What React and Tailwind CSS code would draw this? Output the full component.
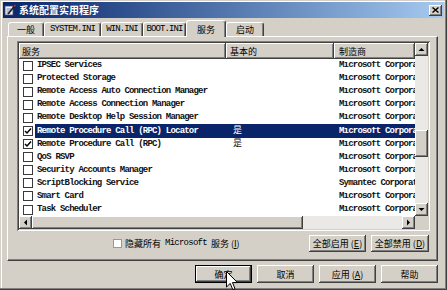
import React from 'react';

const rows = [
  { name: 'IPSEC Services', basic: '', maker: 'Microsoft Corporation' },
  { name: 'Protected Storage', basic: '', maker: 'Microsoft Corporation' },
  { name: 'Remote Access Auto Connection Manager', basic: '', maker: 'Microsoft Corporation' },
  { name: 'Remote Access Connection Manager', basic: '', maker: 'Microsoft Corporation' },
  { name: 'Remote Desktop Help Session Manager', basic: '', maker: 'Microsoft Corporation' },
  { name: 'Remote Procedure Call (RPC) Locator', basic: '是', maker: 'Microsoft Corporation', checked: true, selected: true },
  { name: 'Remote Procedure Call (RPC)', basic: '是', maker: 'Microsoft Corporation', checked: true },
  { name: 'QoS RSVP', basic: '', maker: 'Microsoft Corporation' },
  { name: 'Security Accounts Manager', basic: '', maker: 'Microsoft Corporation' },
  { name: 'ScriptBlocking Service', basic: '', maker: 'Symantec Corporation' },
  { name: 'Smart Card', basic: '', maker: 'Microsoft Corporation' },
  { name: 'Task Scheduler', basic: '', maker: 'Microsoft Corporation' },
];

const tabs = [
  { label: '一般', w: 'w-[36px]' },
  { label: 'SYSTEM.INI', w: 'w-[57px]', mono: true },
  { label: 'WIN.INI', w: 'w-[42px]', mono: true },
  { label: 'BOOT.INI', w: 'w-[43px]', mono: true },
  { label: '服务', w: 'w-[40px]', active: true },
  { label: '启动', w: 'w-[38px]' },
];

// classic 3D edges
const raised = 'shadow-[inset_-1px_-1px_#404040,inset_1px_1px_#ffffff,inset_-2px_-2px_#808080]';
const mono = "font-['Liberation_Mono','Noto_Sans_CJK_SC',monospace] tracking-[-0.75px]";
const monoBold = "font-['Liberation_Mono','Noto_Sans_CJK_SC',monospace] font-bold tracking-[-0.8px]";

export default function App() {
  return (
    <div className="relative w-[447px] h-[290px] bg-[#d4d0c8] pt-[2px] px-[3px] pb-[3px] flex flex-col overflow-hidden text-black font-['Noto_Sans_CJK_SC','Noto_Sans',sans-serif] shadow-[inset_-1px_-1px_#404040,inset_-2px_-2px_#808080,inset_1px_1px_#d4d0c8,inset_2px_2px_#ffffff]">
      {/* 标题栏 */}
      <div className="h-[16px] flex items-center bg-gradient-to-r from-[#0a246a] to-[#a6caf0]">
        <svg width="12" height="12" viewBox="0 0 12 12" className="ml-[1px]">
          <rect x="1" y="2" width="8" height="9" fill="#f4f4f4" stroke="#3a4a7a" strokeWidth="0.8" />
          <path d="M2.5 5h5M2.5 7h5M2.5 9h4" stroke="#4a6ab0" strokeWidth="0.8" />
          <path d="M4 10 L11 1.5" stroke="#202020" strokeWidth="1.6" />
          <path d="M10 2.5 L11.5 1" stroke="#c03020" strokeWidth="1.4" />
        </svg>
        <span className="ml-[3px] text-[10px] leading-none font-bold text-white">系统配置实用程序</span>
        <div className={`ml-auto mr-[2px] w-[13px] h-[11px] bg-[#d4d0c8] flex items-center justify-center ${raised}`}>
          <svg width="7" height="6" viewBox="0 0 7 6">
            <path d="M0.5 0.5 L6.5 5.5 M6.5 0.5 L0.5 5.5" stroke="#000" strokeWidth="1.4" />
          </svg>
        </div>
      </div>

      <div className="flex-1 flex flex-col pl-[4px] pr-[6px]">
        {/* 选项卡 */}
        <div className="relative z-10 h-[18px] flex items-end pl-[1px]">
          {tabs.map((t) => (
            <div
              key={t.label}
              className={`${t.w} ${t.active ? 'h-[17px] -mb-px' : 'h-[14px]'} bg-[#d4d0c8] rounded-t-[3px] border-t border-l border-r border-t-white border-l-white border-r-[#404040] shadow-[inset_-1px_0_#808080] flex items-center justify-center text-[9px] leading-none whitespace-nowrap ${t.mono ? "font-['Liberation_Mono',monospace] tracking-[-0.9px]" : ''}`}
            >
              {t.label}
            </div>
          ))}
        </div>

        {/* 选项卡面板 */}
        <div className="h-[225px] flex flex-col border border-t-white border-l-white border-r-[#404040] border-b-[#404040] shadow-[inset_-1px_-1px_#808080]">
          <ListView />

          <div className="mt-[4px] h-[17px] flex items-center pr-[8px]">
            <div className="ml-[105px] flex items-center text-[9px] leading-none whitespace-nowrap">
              <div className="w-[9px] h-[9px] bg-white border border-[#9a9890] mr-[3px]" />
              <span>隐藏所有</span>
              <span className={`${mono} mx-[4px]`}>Microsoft</span>
              <span>服务</span>
              <span className="ml-[2px]">(<span className="underline">I</span>)</span>
            </div>
            <div className="ml-auto flex gap-[5px]">
              <Btn w="w-[57px]">全部启用 (<span className="underline">E</span>)</Btn>
              <Btn w="w-[58px]">全部禁用 (<span className="underline">D</span>)</Btn>
            </div>
          </div>
        </div>

        {/* 底部按钮 */}
        <div className="mt-[4px] h-[18px] flex justify-end gap-[5px]">
          <div className="w-[57px] h-[18px] border border-black">
            <div className={`h-full flex items-center justify-center text-[9px] leading-none ${raised}`}>确定</div>
          </div>
          <Btn w="w-[57px]" h="h-[18px]">取消</Btn>
          <Btn w="w-[57px]" h="h-[18px]">应用 (<span className="underline">A</span>)</Btn>
          <Btn w="w-[57px]" h="h-[18px]">帮助</Btn>
        </div>
      </div>

      {/* 鼠标指针 */}
      <svg className="absolute left-[226px] top-[271px]" width="13" height="20" viewBox="0 0 13 20">
        <path d="M0.5 0.5 L0.5 16 L4.2 12.4 L6.8 18.6 L9 17.7 L6.5 11.6 L11.5 11.6 Z" fill="#fff" stroke="#000" strokeWidth="1" strokeLinejoin="miter" />
      </svg>
    </div>
  );
}

function Btn({ children, w, h = 'h-[17px]' }) {
  return (
    <div className={`${w} ${h} flex items-center justify-center text-[9px] leading-none whitespace-nowrap ${raised}`}>
      {children}
    </div>
  );
}

function ListView() {
  return (
    <div className="ml-[9px] mt-[4px] w-[413px] h-[190px] bg-white p-[2px] flex flex-col shadow-[inset_1px_1px_#808080,inset_-1px_-1px_#ffffff,inset_2px_2px_#404040,inset_-2px_-2px_#d4d0c8]">
      <div className="h-[173px] flex">
        <div className="w-[396px] flex flex-col overflow-hidden">
          <div className="h-[16px] shrink-0 flex text-[9px] leading-none">
            <div className={`w-[207px] bg-[#d4d0c8] flex items-center pl-[3px] ${raised}`}>服务</div>
            <div className={`w-[108px] bg-[#d4d0c8] flex items-center pl-[4px] ${raised}`}>基本的</div>
            <div className={`flex-1 bg-[#d4d0c8] flex items-center pl-[5px] ${raised}`}>制造商</div>
          </div>
          {rows.map((r) => (
            <Row key={r.name} r={r} />
          ))}
        </div>
        {/* 竖向滚动条 */}
        <div className="w-[13px] flex flex-col bg-[#ebe9e5]">
          <Arrow dir="up" />
          <div className="flex-1">
            <div className={`mt-[74px] h-[27px] bg-[#d4d0c8] ${raised}`} />
          </div>
          <Arrow dir="down" />
        </div>
      </div>
      {/* 横向滚动条 */}
      <div className="h-[13px] flex bg-[#ebe9e5]">
        <Arrow dir="left" />
        <div className={`w-[271px] bg-[#d4d0c8] ${raised}`} />
        <div className="flex-1" />
        <Arrow dir="right" />
        <div className="w-[13px] bg-[#d4d0c8]" />
      </div>
    </div>
  );
}

function Row({ r }) {
  return (
    <div className={`h-[13.1px] shrink-0 flex items-center whitespace-nowrap text-[9px] leading-none ${monoBold}`}>
      <div className="w-[16px] pl-[4px] flex items-center">
        <div className="w-[10px] h-[10px] bg-white border border-[#3a3a3a] flex items-center justify-center">
          {r.checked && (
            <svg width="8" height="8" viewBox="0 0 8 8">
              <path d="M1 4 L3 6 L7 1.5" fill="none" stroke="#000" strokeWidth="1.5" />
            </svg>
          )}
        </div>
      </div>
      <div className={`flex-1 h-full flex items-center overflow-hidden ${r.selected ? 'bg-[#0a246a] text-white' : 'text-[#111]'}`}>
        <span className="w-[191px] shrink-0 pl-[2px]">{r.name}</span>
        <span className="w-[108px] shrink-0 pl-[7px] font-normal">{r.basic}</span>
        <span className="w-[81px] shrink-0 pl-[5px] overflow-hidden">{r.maker}</span>
      </div>
    </div>
  );
}

function Arrow({ dir }) {
  const paths = {
    up: 'M0.5 4 L3.5 1 L6.5 4 Z',
    down: 'M0.5 1 L3.5 4 L6.5 1 Z',
    left: 'M4 0.5 L1 3.5 L4 6.5 Z',
    right: 'M1 0.5 L4 3.5 L1 6.5 Z',
  };
  const vertical = dir === 'up' || dir === 'down';
  return (
    <div className={`w-[13px] h-[13px] shrink-0 bg-[#d4d0c8] flex items-center justify-center ${raised}`}>
      <svg width={vertical ? 7 : 5} height={vertical ? 5 : 7} viewBox={vertical ? '0 0 7 5' : '0 0 5 7'}>
        <path d={paths[dir]} fill="#000" />
      </svg>
    </div>
  );
}
